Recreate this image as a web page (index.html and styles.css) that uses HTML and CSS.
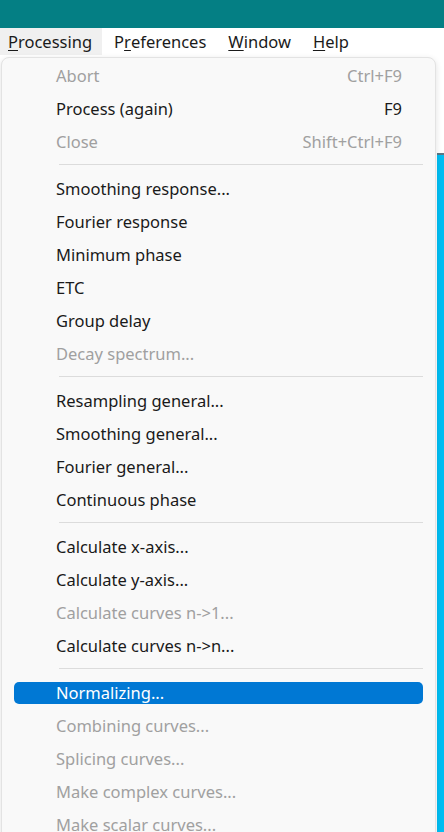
FILE: index.html
```html
<!DOCTYPE html>
<html lang="en">
<head>
<meta charset="UTF-8" />
<meta name="viewport" content="width=device-width, initial-scale=1.0"/>
<title>Processing menu</title>
<link rel="stylesheet" href="styles.css">
</head>
<body>
<!-- Window title -->
<div class="titlebar"></div>

<!-- Menu bar -->
<div class="menubar">
  <span class="top open"><u>P</u>rocessing</span>
  <span class="top">P<u>r</u>eferences</span>
  <span class="top"><u>W</u>indow</span>
  <span class="top"><u>H</u>elp</span>
</div>

<!-- Work area -->
<div class="desk">
  <div class="panel"></div>

  <!-- Dropdown -->
  <div class="dropdown">
    <div class="item off"><div class="in"><span>Abort</span><span class="key">Ctrl+F9</span></div></div>
    <div class="item"><div class="in"><span>Process (again)</span><span class="key">F9</span></div></div>
    <div class="item off"><div class="in"><span>Close</span><span class="key">Shift+Ctrl+F9</span></div></div>
    <div class="sep"></div>
    <div class="item"><div class="in"><span>Smoothing response...</span></div></div>
    <div class="item"><div class="in"><span>Fourier response</span></div></div>
    <div class="item"><div class="in"><span>Minimum phase</span></div></div>
    <div class="item"><div class="in"><span>ETC</span></div></div>
    <div class="item"><div class="in"><span>Group delay</span></div></div>
    <div class="item off"><div class="in"><span>Decay spectrum...</span></div></div>
    <div class="sep"></div>
    <div class="item"><div class="in"><span>Resampling general...</span></div></div>
    <div class="item"><div class="in"><span>Smoothing general...</span></div></div>
    <div class="item"><div class="in"><span>Fourier general...</span></div></div>
    <div class="item"><div class="in"><span>Continuous phase</span></div></div>
    <div class="sep"></div>
    <div class="item"><div class="in"><span>Calculate x-axis...</span></div></div>
    <div class="item"><div class="in"><span>Calculate y-axis...</span></div></div>
    <div class="item off"><div class="in"><span>Calculate curves n-&gt;1...</span></div></div>
    <div class="item"><div class="in"><span>Calculate curves n-&gt;n...</span></div></div>
    <div class="sep"></div>
    <div class="item active"><div class="in"><span>Normalizing...</span></div></div>
    <div class="item off"><div class="in"><span>Combining curves...</span></div></div>
    <div class="item off"><div class="in"><span>Splicing curves...</span></div></div>
    <div class="item off"><div class="in"><span>Make complex curves...</span></div></div>
    <div class="item off"><div class="in"><span>Make scalar curves...</span></div></div>
  </div>
</div>
</body>
</html>
```

FILE: styles.css
```css
html, body {
  margin: 0;
  padding: 0;
  height: 100%;
  overflow: hidden;
  background: #ffffff;
  font-family: 'Noto Sans', 'Open Sans', sans-serif;
  color: #1a1a1a;
}

.titlebar {
  height: 28px;
  background: #047f84;
}

.menubar {
  height: 27px;
  display: flex;
  align-items: stretch;
  font-size: 16.5px;
  background: #ffffff;
}

.top {
  display: flex;
  align-items: center;
  padding: 0 10px 0 8px;
  margin-right: 4px;
}

.top.open {
  background: #f0f0f0;
}

.top u {
  text-underline-offset: 2px;
}

.desk {
  position: relative;
  height: calc(100% - 55px);
  display: flex;
  justify-content: flex-end;
}

.panel {
  width: 7px;
  margin-top: 98px;
  background: #00bdf2;
  border-top: 2px solid #5c7784;
}

.dropdown {
  position: absolute;
  top: 2px;
  left: 1px;
  width: 433px;
  padding-top: 1px;
  background: #f9f9f9;
  border: 1px solid #e3e3e3;
  border-radius: 8px;
  box-shadow: 0 2px 6px rgba(0,0,0,0.12);
  font-size: 16.5px;
}

.item {
  height: 33px;
  padding: 0 12px;
  display: flex;
  align-items: center;
}

.in {
  flex: 1;
  height: 22px;
  display: flex;
  align-items: center;
  justify-content: space-between;
  padding: 0 21px 0 42px;
  border-radius: 5px;
}

.off {
  color: #a0a0a0;
}

.active .in {
  background: #0078d4;
  color: #ffffff;
}

.sep {
  height: 1px;
  margin: 6px 12px 7px 57px;
  background: #dcdcdc;
}
```
